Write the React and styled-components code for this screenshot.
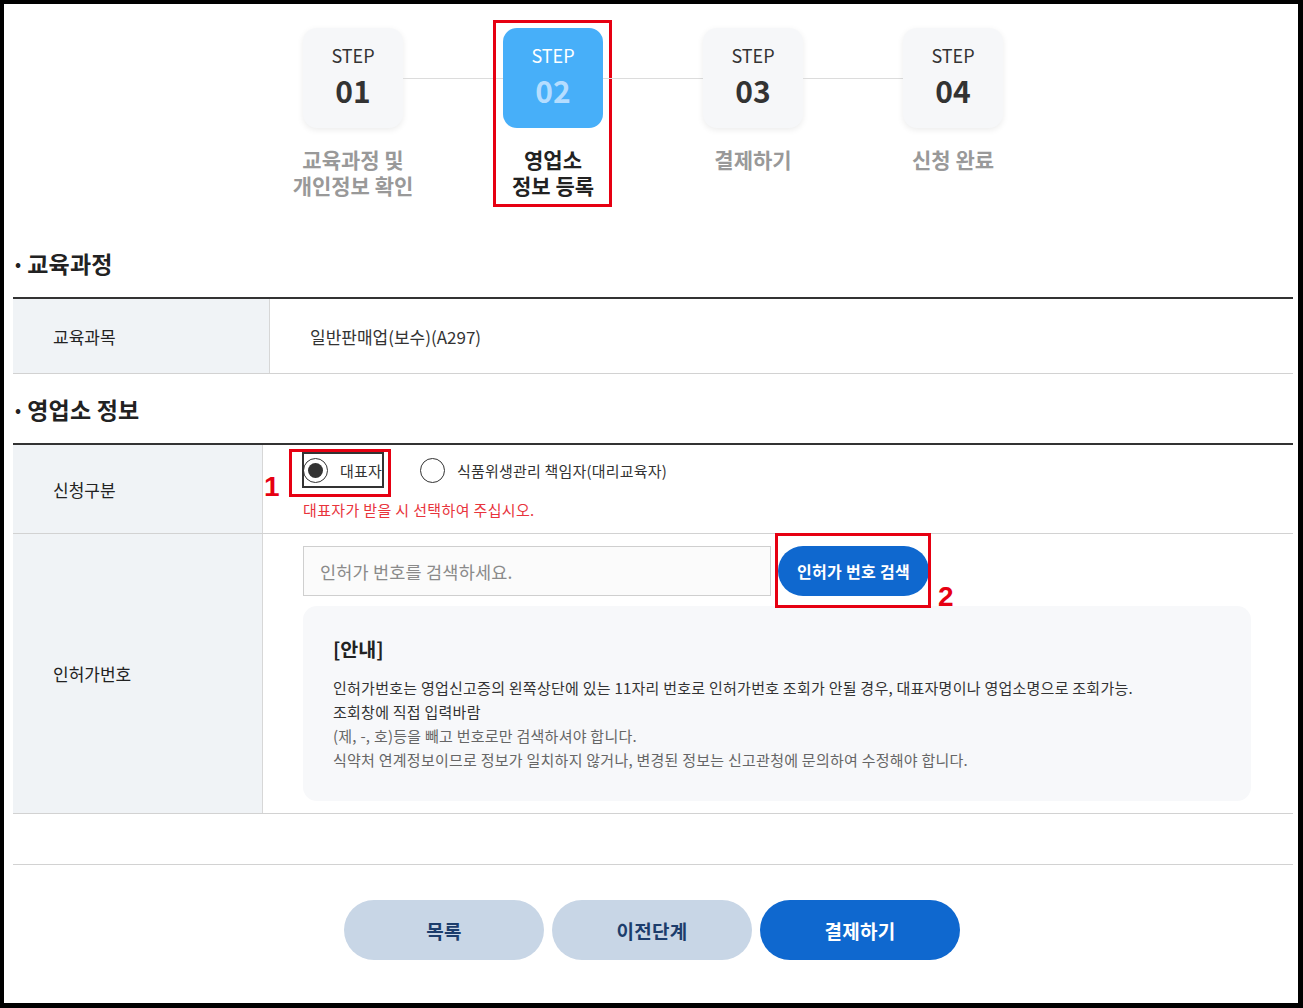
import React from "react";
import styled, { createGlobalStyle, css } from "styled-components";

const GlobalStyle = createGlobalStyle`
  * { box-sizing: border-box; }
  body {
    margin: 0;
    font-family: "Noto Sans CJK KR", "Noto Sans", sans-serif;
    color: #222;
    background: #fff;
  }
`;

const Styled = {
  Frame: styled.div`
    width: 1303px;
    height: 1008px;
    border-style: solid;
    border-color: #000;
    border-width: 4px 5px 5px 4px;
    padding: 24px 5px 0 9px;
    background: #fff;
    overflow: hidden;
  `,

  Steps: styled.ol`
    list-style: none;
    margin: 0;
    padding: 0;
    display: flex;
    justify-content: center;
  `,

  Step: styled.li`
    position: relative;
    width: 200px;
    display: flex;
    flex-direction: column;
    align-items: center;

    &:not(:last-child)::after {
      content: "";
      position: absolute;
      top: 50px;
      left: 150px;
      width: 100px;
      height: 1px;
      background: #dcdcdc;
    }
  `,

  StepBox: styled.div`
    width: 100px;
    height: 100px;
    border-radius: 14px;
    padding-top: 16px;
    display: flex;
    flex-direction: column;
    align-items: center;
    background: ${({ active }) => (active ? "#47aff9" : "#f6f7f9")};
    box-shadow: ${({ active }) =>
      active ? "none" : "0 2px 6px rgba(0, 0, 0, 0.08)"};
  `,

  StepLabel: styled.span`
    font-size: 18px;
    line-height: 22px;
    color: ${({ active }) => (active ? "#fff" : "#333")};
  `,

  StepNumber: styled.span`
    margin-top: 6px;
    font-size: 30px;
    line-height: 36px;
    font-weight: 700;
    color: ${({ active }) => (active ? "#b5ddff" : "#333")};
  `,

  StepName: styled.p`
    margin: 18px 0 0;
    font-size: 21px;
    font-weight: 700;
    text-align: center;
    color: ${({ active }) => (active ? "#222" : "#999")};

    span {
      display: block;
      line-height: 26px;
      white-space: nowrap;
    }
  `,

  RedMark: styled.span`
    position: absolute;
    border: 3px solid #e60012;
    pointer-events: none;
    ${({ box }) => css`
      top: ${box[0]}px;
      right: ${box[1]}px;
      bottom: ${box[2]}px;
      left: ${box[3]}px;
    `}
  `,

  MarkNumber: styled.span`
    position: absolute;
    font-family: "Liberation Sans", Arial, sans-serif;
    font-size: 28px;
    line-height: 28px;
    font-weight: 700;
    color: #e60012;
    ${({ at }) => css`
      left: ${at[0]}px;
      top: ${at[1]}px;
    `}
  `,

  SectionTitle: styled.h2`
    margin: ${({ first }) => (first ? "50px" : "20px")} 0 19px;
    padding-left: 2px;
    font-size: 23px;
    line-height: 30px;
    font-weight: 700;
    letter-spacing: 0.2px;
    color: #222;

    &::before {
      content: "•";
      margin-right: 6px;
      font-size: 16px;
      vertical-align: 3px;
    }
  `,

  Table: styled.div`
    border-top: 2px solid #333;
    width: 1280px;
  `,

  Row: styled.div`
    display: grid;
    grid-template-columns: ${({ head }) => head}px 1fr;
    border-bottom: 1px solid #d2d2d2;
    min-height: ${({ min }) => min || 0}px;
  `,

  Th: styled.div`
    background: #f0f3f6;
    border-right: 1px solid #d7d7d7;
    display: flex;
    align-items: center;
    padding-left: 40px;
    font-size: 17px;
    color: #222;
  `,

  Td: styled.div`
    padding: 12px 42px 12px 40px;
    display: flex;
    flex-direction: column;
    justify-content: center;
    font-size: 17px;
    color: #333;
  `,

  RadioRow: styled.div`
    display: flex;
    align-items: center;
    gap: 38px;
    height: 26px;
  `,

  RadioItem: styled.label`
    position: relative;
    display: inline-flex;
    align-items: center;
    gap: 12px;
    font-size: 15px;
    color: #333;
    letter-spacing: 0.2px;
  `,

  Circle: styled.span`
    width: 25px;
    height: 25px;
    border-radius: 50%;
    border: 1.5px solid #333;
    display: flex;
    align-items: center;
    justify-content: center;

    &::after {
      content: "";
      width: 15px;
      height: 15px;
      border-radius: 50%;
      background: ${({ checked }) => (checked ? "#333" : "transparent")};
    }
  `,

  FocusRing: styled.span`
    position: absolute;
    top: -6px;
    bottom: -5px;
    left: -1px;
    right: -2px;
    border: 2px solid #333;
    pointer-events: none;
  `,

  Hint: styled.p`
    margin: 16px 0 0;
    font-size: 15px;
    line-height: 22px;
    color: #e8343c;
    letter-spacing: 0.35px;
  `,

  SearchRow: styled.div`
    display: flex;
    gap: 7px;
    align-items: center;
  `,

  Input: styled.input`
    width: 468px;
    height: 50px;
    border: 1px solid #cfcfcf;
    background: #fbfbfb;
    padding: 0 16px;
    font-family: inherit;
    font-size: 17.5px;
    letter-spacing: 0.2px;
    color: #333;

    &::placeholder {
      color: #8a8a8a;
    }
  `,

  SearchWrap: styled.div`
    position: relative;
  `,

  PillButton: styled.button`
    border: 0;
    border-radius: 30px;
    font-family: inherit;
    font-weight: 700;
    letter-spacing: 0.3px;
    cursor: pointer;
    background: ${({ primary }) => (primary ? "#0f68cf" : "#c8d6e6")};
    color: ${({ primary }) => (primary ? "#fff" : "#1c3d6c")};
    width: ${({ w }) => w}px;
    height: ${({ h }) => h}px;
    font-size: ${({ fs }) => fs}px;
  `,

  Notice: styled.div`
    margin-top: 10px;
    background: #f7f8fa;
    border-radius: 14px;
    padding: 28px 30px 29px;
  `,

  NoticeTitle: styled.h3`
    margin: 0 0 12px;
    font-size: 19.5px;
    line-height: 30px;
    font-weight: 700;
    color: #222;
  `,

  NoticeLine: styled.p`
    margin: 0;
    font-size: 15px;
    line-height: 24px;
    letter-spacing: 0.25px;
    color: ${({ muted }) => (muted ? "#666" : "#333")};
  `,

  Divider: styled.hr`
    margin: 50px 0 0;
    width: 1280px;
    border: 0;
    border-top: 1px solid #d2d2d2;
  `,

  Actions: styled.div`
    display: flex;
    justify-content: center;
    gap: 8px;
    margin-top: 35px;
    padding-right: 2px;
  `,
};

const STEPS = [
  { no: "01", name: ["교육과정 및", "개인정보 확인"] },
  { no: "02", name: ["영업소", "정보 등록"], active: true },
  { no: "03", name: ["결제하기"] },
  { no: "04", name: ["신청 완료"] },
];

function StepBar() {
  return (
    <Styled.Steps>
      {STEPS.map((step) => (
        <Styled.Step key={step.no}>
          <Styled.StepBox active={step.active}>
            <Styled.StepLabel active={step.active}>STEP</Styled.StepLabel>
            <Styled.StepNumber active={step.active}>{step.no}</Styled.StepNumber>
          </Styled.StepBox>
          <Styled.StepName active={step.active}>
            {step.name.map((line) => (
              <span key={line}>{line}</span>
            ))}
          </Styled.StepName>
          {step.active && <Styled.RedMark box={[-8, 41, -9, 40]} />}
        </Styled.Step>
      ))}
    </Styled.Steps>
  );
}

function App() {
  return (
    <>
      <GlobalStyle />
      <Styled.Frame>
        <StepBar />

        <Styled.SectionTitle first>교육과정</Styled.SectionTitle>
        <Styled.Table>
          <Styled.Row head={257} min={75}>
            <Styled.Th>교육과목</Styled.Th>
            <Styled.Td>일반판매업(보수)(A297)</Styled.Td>
          </Styled.Row>
        </Styled.Table>

        <Styled.SectionTitle>영업소 정보</Styled.SectionTitle>
        <Styled.Table>
          <Styled.Row head={250}>
            <Styled.Th>신청구분</Styled.Th>
            <Styled.Td>
              <Styled.RadioRow>
                <Styled.RadioItem>
                  <Styled.Circle checked />
                  대표자
                  <Styled.FocusRing />
                  <Styled.RedMark box={[-9, -9, -14, -14]} />
                  <Styled.MarkNumber at={[-39, 15]}>1</Styled.MarkNumber>
                </Styled.RadioItem>
                <Styled.RadioItem>
                  <Styled.Circle />
                  식품위생관리 책임자(대리교육자)
                </Styled.RadioItem>
              </Styled.RadioRow>
              <Styled.Hint>대표자가 받을 시 선택하여 주십시오.</Styled.Hint>
            </Styled.Td>
          </Styled.Row>
          <Styled.Row head={250}>
            <Styled.Th>인허가번호</Styled.Th>
            <Styled.Td>
              <Styled.SearchRow>
                <Styled.Input placeholder="인허가 번호를 검색하세요." />
                <Styled.SearchWrap>
                  <Styled.PillButton primary w={151} h={50} fs={16}>
                    인허가 번호 검색
                  </Styled.PillButton>
                  <Styled.RedMark box={[-13, -2, -12, -3]} />
                  <Styled.MarkNumber at={[160, 37]}>2</Styled.MarkNumber>
                </Styled.SearchWrap>
              </Styled.SearchRow>
              <Styled.Notice>
                <Styled.NoticeTitle>[안내]</Styled.NoticeTitle>
                <Styled.NoticeLine>
                  인허가번호는 영업신고증의 왼쪽상단에 있는 11자리 번호로 인허가번호 조회가 안될 경우, 대표자명이나 영업소명으로 조회가능.
                </Styled.NoticeLine>
                <Styled.NoticeLine>조회창에 직접 입력바람</Styled.NoticeLine>
                <Styled.NoticeLine muted>
                  (제, -, 호)등을 빼고 번호로만 검색하셔야 합니다.
                </Styled.NoticeLine>
                <Styled.NoticeLine muted>
                  식약처 연계정보이므로 정보가 일치하지 않거나, 변경된 정보는 신고관청에 문의하여 수정해야 합니다.
                </Styled.NoticeLine>
              </Styled.Notice>
            </Styled.Td>
          </Styled.Row>
        </Styled.Table>

        <Styled.Divider />

        <Styled.Actions>
          <Styled.PillButton w={200} h={60} fs={19}>
            목록
          </Styled.PillButton>
          <Styled.PillButton w={200} h={60} fs={19}>
            이전단계
          </Styled.PillButton>
          <Styled.PillButton primary w={200} h={60} fs={19}>
            결제하기
          </Styled.PillButton>
        </Styled.Actions>
      </Styled.Frame>
    </>
  );
}

export default App;
